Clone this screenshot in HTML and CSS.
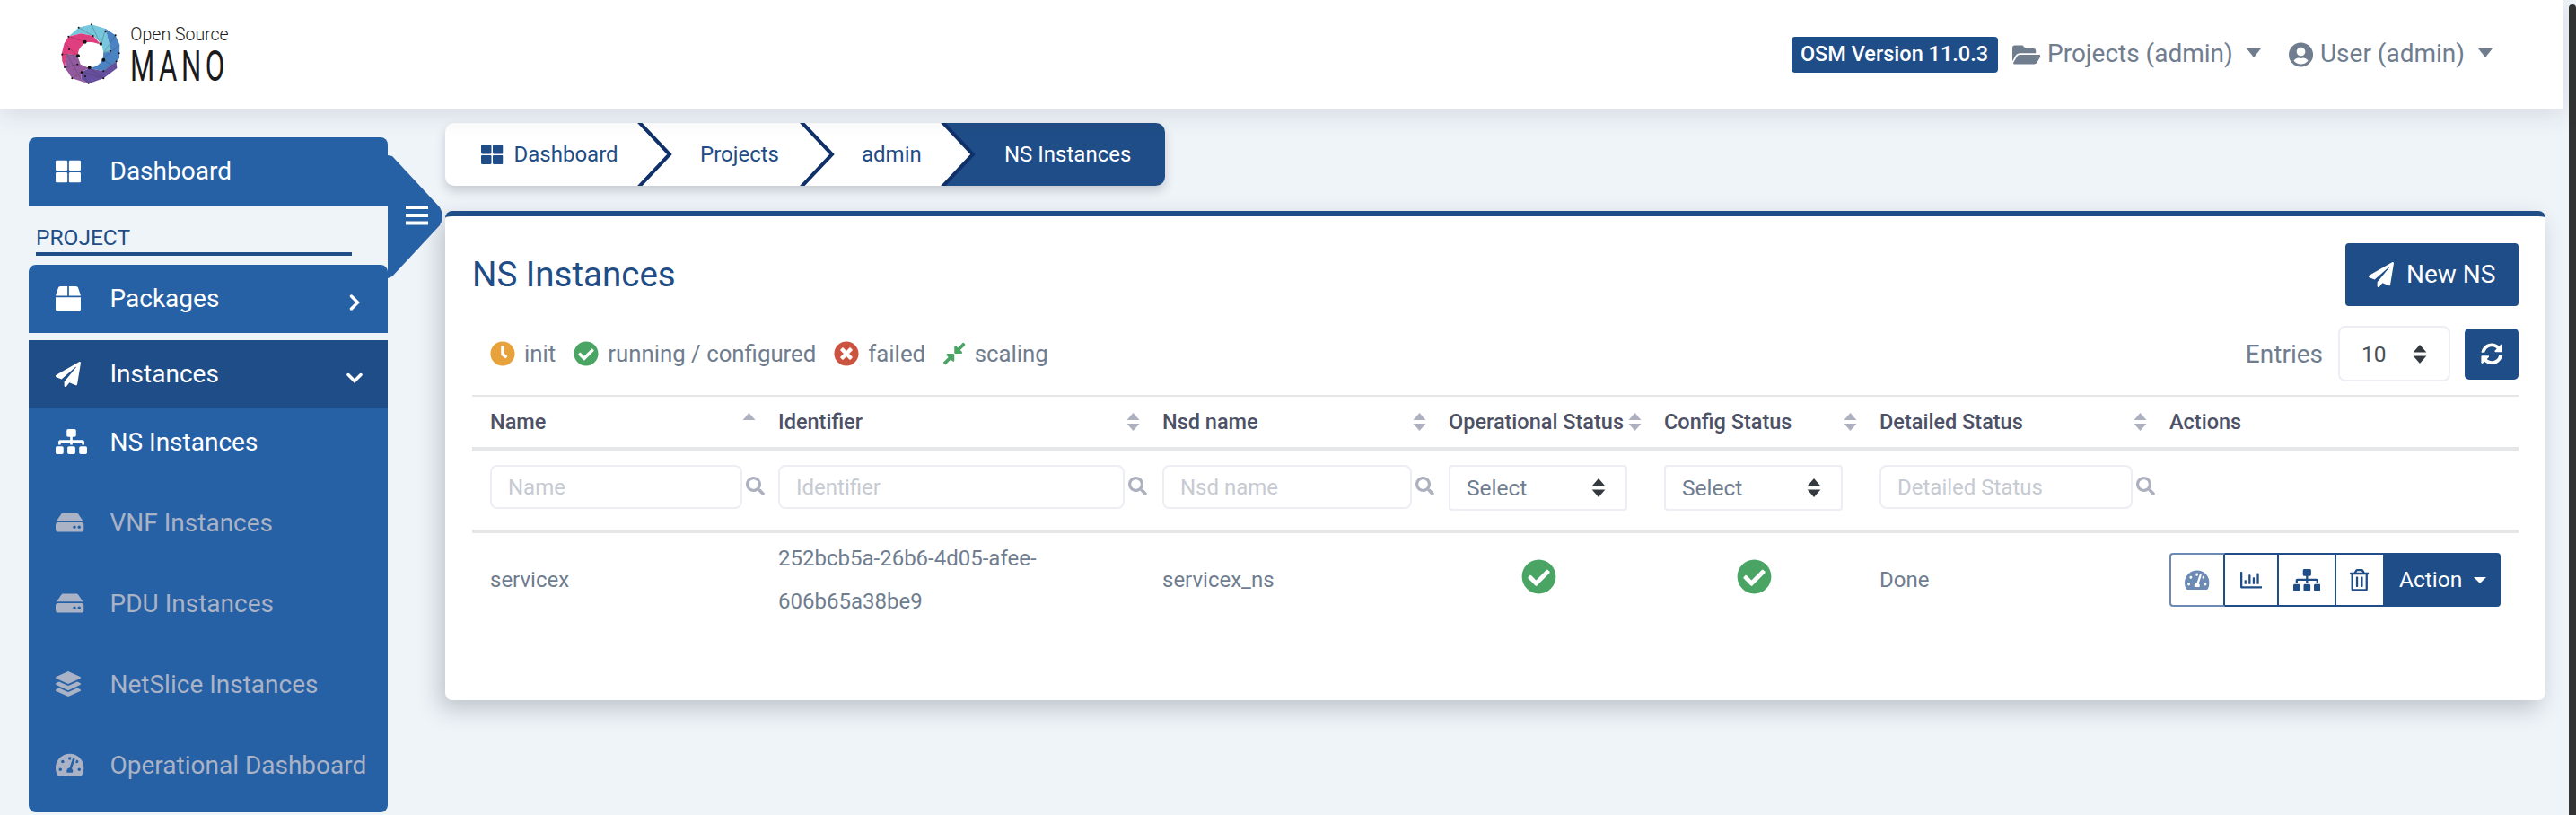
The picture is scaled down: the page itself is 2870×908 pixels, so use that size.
FILE: index.html
```html
<!DOCTYPE html>
<html lang="en">
<head>
<meta charset="utf-8">
<title>NS Instances</title>
<link rel="stylesheet" href="styles.css">
</head>
<body>
<svg class="sprite" xmlns="http://www.w3.org/2000/svg">
  <symbol id="i-th" viewBox="0 0 512 512"><path d="M296 32h192c13.255 0 24 10.745 24 24v160c0 13.255-10.745 24-24 24H296c-13.255 0-24-10.745-24-24V56c0-13.255 10.745-24 24-24zm-80 0H24C10.745 32 0 42.745 0 56v160c0 13.255 10.745 24 24 24h192c13.255 0 24-10.745 24-24V56c0-13.255-10.745-24-24-24zM0 296v160c0 13.255 10.745 24 24 24h192c13.255 0 24-10.745 24-24V296c0-13.255-10.745-24-24-24H24c-13.255 0-24 10.745-24 24zm296 184h192c13.255 0 24-10.745 24-24V296c0-13.255-10.745-24-24-24H296c-13.255 0-24 10.745-24 24v160c0 13.255 10.745 24 24 24z"/></symbol>
  <symbol id="i-box" viewBox="0 0 512 512"><path d="M509.5 184.6L458.9 32.8C452.4 13.2 434.1 0 413.4 0H272v192h238.7c-.4-2.5-.4-5-1.2-7.4zM240 0H98.6c-20.7 0-39 13.2-45.5 32.8L2.5 184.6c-.8 2.4-.8 4.9-1.2 7.4H240V0zM0 224v240c0 26.5 21.5 48 48 48h416c26.5 0 48-21.5 48-48V224H0z"/></symbol>
  <symbol id="i-plane" viewBox="0 0 512 512"><path d="M476 3.2L12.5 270.6c-18.1 10.4-15.8 35.6 2.2 43.2L121 358.4l287.3-253.2c5.5-4.9 13.3 2.6 8.6 8.3L176 407v80.5c0 23.6 28.5 32.9 42.5 15.8L282 426l124.6 52.2c14.2 6 30.4-2.9 33-18.2l72-432C515 7.8 493.3-6.8 476 3.2z"/></symbol>
  <symbol id="i-sitemap" viewBox="0 0 640 512"><path d="M128 352H32c-17.67 0-32 14.33-32 32v96c0 17.67 14.33 32 32 32h96c17.67 0 32-14.33 32-32v-96c0-17.67-14.33-32-32-32zm-24-80h192v48h48v-48h192v48h48v-57.59c0-21.17-17.23-38.41-38.41-38.41H344v-64h40c17.67 0 32-14.33 32-32V32c0-17.67-14.33-32-32-32H256c-17.67 0-32 14.33-32 32v96c0 17.67 14.33 32 32 32h40v64H94.41C73.23 224 56 241.23 56 262.41V320h48v-48zm264 80h-96c-17.67 0-32 14.33-32 32v96c0 17.67 14.33 32 32 32h96c17.67 0 32-14.33 32-32v-96c0-17.67-14.33-32-32-32zm240 0h-96c-17.67 0-32 14.33-32 32v96c0 17.67 14.33 32 32 32h96c17.67 0 32-14.33 32-32v-96c0-17.67-14.33-32-32-32z"/></symbol>
  <symbol id="i-hdd" viewBox="0 0 576 512"><path d="M576 304v96c0 26.51-21.49 48-48 48H48c-26.51 0-48-21.49-48-48v-96c0-26.51 21.49-48 48-48h480c26.51 0 48 21.49 48 48zm-48-80a79.557 79.557 0 0 1 30.777 6.165L462.25 85.374A48.003 48.003 0 0 0 422.311 64H153.689a48 48 0 0 0-39.938 21.374L17.223 230.165A79.557 79.557 0 0 1 48 224h480zm-48 96c-17.673 0-32 14.327-32 32s14.327 32 32 32 32-14.327 32-32-14.327-32-32-32zm-96 0c-17.673 0-32 14.327-32 32s14.327 32 32 32 32-14.327 32-32-14.327-32-32-32z"/></symbol>
  <symbol id="i-layers" viewBox="0 0 512 512"><path d="M12.41 148.02l232.94 105.67c6.8 3.09 14.49 3.09 21.29 0l232.94-105.67c16.55-7.51 16.55-32.52 0-40.03L266.65 2.31a25.607 25.607 0 0 0-21.29 0L12.41 107.98c-16.55 7.51-16.55 32.53 0 40.04zm487.18 88.28l-58.09-26.33-161.64 73.27c-7.56 3.43-15.59 5.17-23.86 5.17s-16.29-1.74-23.86-5.17L70.51 209.97l-58.1 26.33c-16.55 7.5-16.55 32.5 0 40l232.94 105.59c6.8 3.08 14.49 3.08 21.29 0L499.59 276.3c16.55-7.5 16.55-32.5 0-40zm0 127.8l-57.87-26.23-161.86 73.37c-7.56 3.43-15.59 5.17-23.86 5.17s-16.29-1.74-23.86-5.17L70.29 337.87 12.41 364.1c-16.55 7.5-16.55 32.5 0 40l232.94 105.59c6.8 3.08 14.49 3.08 21.29 0L499.59 404.1c16.55-7.5 16.55-32.5 0-40z"/></symbol>
  <symbol id="i-tacho" viewBox="0 0 576 512"><path d="M288 32C128.94 32 0 160.94 0 320c0 52.8 14.25 102.26 39.06 144.8 5.61 9.62 16.3 15.2 27.44 15.2h443c11.14 0 21.83-5.58 27.44-15.2C561.75 422.26 576 372.8 576 320c0-159.06-128.94-288-288-288zm0 64c14.71 0 26.58 10.13 30.32 23.65-1.11 2.26-2.64 4.23-3.45 6.67l-9.22 27.67c-5.13 3.49-10.97 6.01-17.64 6.01-17.67 0-32-14.33-32-32S270.33 96 288 96zM96 384c-17.67 0-32-14.33-32-32s14.33-32 32-32 32 14.33 32 32-14.33 32-32 32zm48-160c-17.67 0-32-14.33-32-32s14.33-32 32-32 32 14.33 32 32-14.33 32-32 32zm246.77-72.41l-61.33 184C343.13 347.33 352 364.54 352 384c0 11.72-3.38 22.55-8.88 32H232.88c-5.5-9.45-8.88-20.28-8.88-32 0-33.94 26.5-61.43 59.9-63.59l61.34-184.01c4.17-12.56 17.73-19.45 30.36-15.17 12.57 4.19 19.35 17.79 15.17 30.36zm14.66 57.2l15.52-46.55c3.47-1.29 7.13-2.23 11.05-2.23 17.67 0 32 14.33 32 32s-14.33 32-32 32c-11.38-.01-20.89-6.28-26.57-15.22zM480 384c-17.67 0-32-14.33-32-32s14.33-32 32-32 32 14.33 32 32-14.33 32-32 32z"/></symbol>
  <symbol id="i-check" viewBox="0 0 512 512"><path d="M504 256c0 136.967-111.033 248-248 248S8 392.967 8 256 119.033 8 256 8s248 111.033 248 248zM227.314 387.314l184-184c6.248-6.248 6.248-16.379 0-22.627l-22.627-22.627c-6.248-6.249-16.379-6.249-22.628 0L216 308.118l-70.059-70.059c-6.248-6.248-16.379-6.248-22.628 0l-22.627 22.627c-6.248 6.248-6.248 16.379 0 22.627l104 104c6.249 6.249 16.379 6.249 22.628.001z"/></symbol>
  <symbol id="i-times" viewBox="0 0 512 512"><path d="M256 8C119 8 8 119 8 256s111 248 248 248 248-111 248-248S393 8 256 8zm121.6 313.1c4.7 4.7 4.7 12.3 0 17L338 377.6c-4.7 4.7-12.3 4.7-17 0L256 312l-65.1 65.6c-4.7 4.7-12.3 4.7-17 0L134.4 338c-4.7-4.7-4.7-12.3 0-17l65.6-65-65.6-65.1c-4.7-4.7-4.7-12.3 0-17l39.6-39.6c4.7-4.7 12.3-4.7 17 0l65 65.7 65.1-65.6c4.7-4.7 12.3-4.7 17 0l39.6 39.6c4.7 4.7 4.7 12.3 0 17L312 256l65.6 65.1z"/></symbol>
  <symbol id="i-clock" viewBox="0 0 512 512"><path d="M256,8C119,8,8,119,8,256S119,504,256,504,504,393,504,256,393,8,256,8Zm92.49,313h0l-20,25a16,16,0,0,1-22.49,2.5h0l-67-49.72a40,40,0,0,1-15-31.23V112a16,16,0,0,1,16-16h32a16,16,0,0,1,16,16V256l58,42.5A16,16,0,0,1,348.49,321Z"/></symbol>
  <symbol id="i-compress" viewBox="0 0 448 512"><path d="M4.686 427.314L104 328l-32.922-31.029C55.958 281.851 66.666 256 88.048 256h112C213.303 256 224 266.745 224 280v112c0 21.382-25.803 32.09-40.922 16.971L152 376l-99.314 99.314c-6.248 6.248-16.379 6.248-22.627 0L4.686 449.941c-6.248-6.248-6.248-16.379 0-22.627zM443.314 84.686L344 184l32.922 32.029c15.12 15.12 4.412 40.971-16.97 40.971h-112C234.697 257 224 246.255 224 233V121c0-21.382 25.803-32.09 40.922-16.971L296 136l99.314-99.314c6.248-6.248 16.379-6.248 22.627 0l25.373 25.373c6.248 6.248 6.248 16.379 0 22.627z"/></symbol>
  <symbol id="i-folder" viewBox="0 0 576 512"><path d="M572.694 292.093L500.27 416.248A63.997 63.997 0 0 1 444.989 448H45.025c-18.523 0-30.064-20.093-20.731-36.093l72.424-124.155A64 64 0 0 1 152 256h399.964c18.523 0 30.064 20.093 20.73 36.093zM152 224h328v-48c0-26.51-21.49-48-48-48H272l-64-64H48C21.49 64 0 85.49 0 112v278.046l69.077-118.418C86.214 242.25 117.989 224 152 224z"/></symbol>
  <symbol id="i-user" viewBox="0 0 496 512"><path d="M248 8C111 8 0 119 0 256s111 248 248 248 248-111 248-248S385 8 248 8zm0 96c48.6 0 88 39.4 88 88s-39.4 88-88 88-88-39.4-88-88 39.4-88 88-88zm0 344c-58.7 0-111.3-26.6-146.5-68.2 18.8-35.4 55.6-59.8 98.5-59.8 2.4 0 4.8.4 7.1 1.1 13 4.2 26.6 6.9 40.9 6.9 14.3 0 28-2.7 40.9-6.9 2.3-.7 4.7-1.1 7.1-1.1 42.9 0 79.7 24.4 98.5 59.8C359.3 421.4 306.7 448 248 448z"/></symbol>
  <symbol id="i-search" viewBox="0 0 512 512"><path d="M505 442.7L405.3 343c-4.5-4.5-10.6-7-17-7H372c27.6-35.3 44-79.7 44-128C416 93.1 322.9 0 208 0S0 93.1 0 208s93.1 208 208 208c48.3 0 92.7-16.4 128-44v16.3c0 6.4 2.5 12.5 7 17l99.7 99.7c9.4 9.4 24.6 9.4 33.9 0l28.3-28.3c9.4-9.4 9.4-24.6.1-34zM208 336c-70.7 0-128-57.2-128-128 0-70.7 57.2-128 128-128 70.7 0 128 57.2 128 128 0 70.7-57.2 128-128 128z"/></symbol>
  <symbol id="i-sync" viewBox="0 0 512 512"><path d="M370.72 133.28C339.458 104.008 298.888 87.962 255.848 88c-77.458.068-144.328 53.178-162.791 126.85-1.344 5.363-6.122 9.15-11.651 9.15H24.103c-7.498 0-13.194-6.807-11.807-14.176C33.933 94.924 134.813 8 256 8c66.448 0 126.791 26.136 171.315 68.685L463.03 40.97C478.149 25.851 504 36.559 504 57.941V192c0 13.255-10.745 24-24 24H345.941c-21.382 0-32.09-25.851-16.971-40.971l41.75-41.749zM32 296h134.059c21.382 0 32.09 25.851 16.971 40.971l-41.75 41.75c31.262 29.273 71.835 45.319 114.876 45.28 77.418-.07 144.315-53.144 162.787-126.849 1.344-5.363 6.122-9.15 11.651-9.15h57.304c7.498 0 13.194 6.807 11.807 14.176C478.067 417.076 377.187 504 256 504c-66.448 0-126.791-26.136-171.315-68.685L48.97 471.03C33.851 486.149 8 475.441 8 454.059V320c0-13.255 10.745-24 24-24z"/></symbol>
  <symbol id="i-chart" viewBox="0 0 512 512"><path d="M396.8 352h22.4c6.4 0 12.8-6.4 12.8-12.8V108.8c0-6.4-6.4-12.8-12.8-12.8h-22.4c-6.4 0-12.8 6.4-12.8 12.8v230.4c0 6.4 6.4 12.8 12.8 12.8zm-192 0h22.4c6.4 0 12.8-6.4 12.8-12.8V140.8c0-6.4-6.4-12.8-12.8-12.8h-22.4c-6.4 0-12.8 6.4-12.8 12.8v198.4c0 6.4 6.4 12.8 12.8 12.8zm96 0h22.4c6.4 0 12.8-6.4 12.8-12.8V204.8c0-6.4-6.4-12.8-12.8-12.8h-22.4c-6.4 0-12.8 6.4-12.8 12.8v134.4c0 6.4 6.4 12.8 12.8 12.8zM496 400H48V80c0-8.84-7.16-16-16-16H16C7.16 64 0 71.16 0 80v336c0 17.67 14.33 32 32 32h464c8.84 0 16-7.16 16-16v-16c0-8.84-7.16-16-16-16zm-387.2-48h22.4c6.4 0 12.8-6.4 12.8-12.8v-70.4c0-6.4-6.4-12.8-12.8-12.8h-22.4c-6.4 0-12.8 6.4-12.8 12.8v70.4c0 6.4 6.4 12.8 12.8 12.8z"/></symbol>
  <symbol id="i-trash" viewBox="0 0 448 512"><path d="M268 416h24a12 12 0 0 0 12-12V188a12 12 0 0 0-12-12h-24a12 12 0 0 0-12 12v216a12 12 0 0 0 12 12zM432 80h-82.41l-34-56.7A48 48 0 0 0 274.41 0H173.59a48 48 0 0 0-41.16 23.3L98.41 80H16A16 16 0 0 0 0 96v16a16 16 0 0 0 16 16h16v336a48 48 0 0 0 48 48h288a48 48 0 0 0 48-48V128h16a16 16 0 0 0 16-16V96a16 16 0 0 0-16-16zM171.84 50.91A6 6 0 0 1 177 48h94a6 6 0 0 1 5.15 2.91L293.61 80H154.39zM368 464H80V128h288zm-212-48h24a12 12 0 0 0 12-12V188a12 12 0 0 0-12-12h-24a12 12 0 0 0-12 12v216a12 12 0 0 0 12 12z"/></symbol>
  <symbol id="i-sort" viewBox="0 0 15 20"><path d="M7.5 0L14.5 8H.5zM7.5 20L.5 12h14z"/></symbol>
  <symbol id="i-sortup" viewBox="0 0 15 20"><path d="M7.5 0L14.5 8H.5z"/></symbol>
</svg>

<div class="app">
  <div class="page">
    <header class="topbar">
      <div class="brand">
        <svg class="logo" viewBox="200 75 205 210" role="img" aria-label="Open Source MANO logo">
          <path class="lg-teal" d="M228 122L262 92L305 82L352 96L370 170L345 177L338 145L310 120L270 112Z"/>
          <path class="lg-blue" d="M352 96L385 118L399 150L398 195L388 205L345 238L298 228L340 200L345 177L370 170Z"/>
          <path class="lg-deep" d="M298 228L345 238L388 205L390 228L345 262L295 280L270 265L272 240Z"/>
          <path class="lg-plum" d="M258 185L268 215L298 228L272 240L270 265L295 280L240 262L215 225L222 180Z"/>
          <path class="lg-pink" d="M205 180L214 145L228 122L270 112L310 120L335 147L283 140L258 185L222 180L215 225L207 205Z"/>
          <circle class="lg-hole" cx="302" cy="183" r="42"/>
          <path class="lg-mesh" d="M228 122L283 140M262 92L310 120M305 82L335 147M352 96L338 145M368 168L345 177M385 118L345 177M398 150L340 200M388 205L345 238M345 200L390 228M298 228L345 262M272 240L345 262M272 240L295 280M258 215L215 225M222 180L270 265M205 180L258 185M214 145L258 185M240 262L272 240"/>
          <g class="lg-dots">
            <circle cx="283" cy="140" r="6"/><circle cx="336" cy="147" r="5"/><circle cx="345" cy="200" r="6"/><circle cx="298" cy="226" r="6"/><circle cx="260" cy="187" r="6"/>
            <circle cx="228" cy="122" r="3"/><circle cx="262" cy="92" r="3"/><circle cx="305" cy="82" r="3"/><circle cx="352" cy="106" r="3"/><circle cx="368" cy="170" r="3"/><circle cx="385" cy="118" r="3"/><circle cx="397" cy="178" r="3"/><circle cx="388" cy="205" r="3"/><circle cx="345" cy="238" r="3"/><circle cx="345" cy="262" r="3"/><circle cx="295" cy="278" r="3"/><circle cx="272" cy="242" r="4"/><circle cx="284" cy="255" r="3"/><circle cx="240" cy="262" r="3"/><circle cx="215" cy="225" r="3"/><circle cx="207" cy="182" r="3"/><circle cx="230" cy="165" r="3"/><circle cx="258" cy="215" r="3"/><circle cx="310" cy="120" r="3"/>
          </g>
        </svg>
        <div class="brand-text">
          <span class="brand-small">Open Source</span>
          <span class="brand-big">MANO</span>
        </div>
      </div>
      <nav class="topnav">
        <span class="badge">OSM Version 11.0.3</span>
        <a class="topnav-item projects"><svg class="ico w576"><use href="#i-folder"/></svg><span>Projects (admin)</span><i class="caret"></i></a>
        <a class="topnav-item users"><svg class="ico w496"><use href="#i-user"/></svg><span>User (admin)</span><i class="caret"></i></a>
      </nav>
    </header>

    <main class="layout">
      <aside class="sidebar">
        <a class="side-link side-top"><span class="side-icon"><svg class="ico w512"><use href="#i-th"/></svg></span><span class="side-text">Dashboard</span></a>
        <div class="side-title"><span>PROJECT</span></div>
        <a class="side-link side-top"><span class="side-icon"><svg class="ico w512"><use href="#i-box"/></svg></span><span class="side-text">Packages</span>
          <svg class="side-chev chev-right" viewBox="0 0 12 18"><path d="M2.5 2L9.5 9L2.5 16"/></svg></a>
        <a class="side-link side-open"><span class="side-icon"><svg class="ico w512"><use href="#i-plane"/></svg></span><span class="side-text">Instances</span>
          <svg class="side-chev chev-down" viewBox="0 0 18 12"><path d="M2 2.5L9 9.5L16 2.5"/></svg></a>
        <ul class="side-sub">
          <li class="sub-item is-active"><span class="side-icon"><svg class="ico w640"><use href="#i-sitemap"/></svg></span>NS Instances</li>
          <li class="sub-item"><span class="side-icon"><svg class="ico w576"><use href="#i-hdd"/></svg></span>VNF Instances</li>
          <li class="sub-item"><span class="side-icon"><svg class="ico w576"><use href="#i-hdd"/></svg></span>PDU Instances</li>
          <li class="sub-item"><span class="side-icon"><svg class="ico w512"><use href="#i-layers"/></svg></span>NetSlice Instances</li>
          <li class="sub-item"><span class="side-icon"><svg class="ico w576"><use href="#i-tacho"/></svg></span>Operational Dashboard</li>
        </ul>
        <button class="side-toggle" aria-label="Toggle sidebar">
          <svg viewBox="0 0 64 137"><path class="toggle-shape" d="M0 0L5 1L58 58Q64 68 58 78L5 135L0 137Z"/><path class="toggle-bars" d="M20 56h25v4H20zM20 65h25v4H20zM20 73.500h25v4H20z"/></svg>
        </button>
      </aside>

      <section class="content">
        <ol class="crumbs">
          <li class="crumb crumb-a"><svg class="ico w512"><use href="#i-th"/></svg><span>Dashboard</span><svg class="crumb-sep" viewBox="0 0 40 70"><path d="M0 -3L36 35L0 73"/></svg></li>
          <li class="crumb crumb-b"><span>Projects</span><svg class="crumb-sep" viewBox="0 0 40 70"><path d="M0 -3L36 35L0 73"/></svg></li>
          <li class="crumb crumb-c"><span>admin</span><svg class="crumb-sep sep-fill" viewBox="0 0 40 70"><path d="M0 -3L36 35L0 73"/></svg></li>
          <li class="crumb crumb-d"><span>NS Instances</span></li>
        </ol>

        <div class="card">
          <div class="card-head">
            <h1 class="card-title">NS Instances</h1>
            <button class="btn-new"><svg class="ico w512"><use href="#i-plane"/></svg><span>New NS</span></button>
          </div>
          <div class="toolbar">
            <ul class="legend">
              <li><svg class="ico w512 c-orange"><use href="#i-clock"/></svg>init</li>
              <li><svg class="ico w512 c-green"><use href="#i-check"/></svg>running / configured</li>
              <li><svg class="ico w512 c-red"><use href="#i-times"/></svg>failed</li>
              <li><svg class="ico w448 c-green"><use href="#i-compress"/></svg>scaling</li>
            </ul>
            <div class="entries">
              <span class="entries-label">Entries</span>
              <div class="select select-entries"><span>10</span><svg class="select-arrow"><use href="#i-sort"/></svg></div>
              <button class="btn-refresh" aria-label="Refresh"><svg class="ico w512"><use href="#i-sync"/></svg></button>
            </div>
          </div>

          <table class="grid">
            <colgroup>
              <col class="col-name"><col class="col-id"><col class="col-nsd"><col class="col-status"><col class="col-status"><col class="col-detail"><col class="col-actions">
            </colgroup>
            <thead>
              <tr class="row-head">
                <th><div class="th-in"><span>Name</span><svg class="sort"><use href="#i-sortup"/></svg></div></th>
                <th><div class="th-in"><span>Identifier</span><svg class="sort"><use href="#i-sort"/></svg></div></th>
                <th><div class="th-in"><span>Nsd name</span><svg class="sort"><use href="#i-sort"/></svg></div></th>
                <th><div class="th-in"><span>Operational Status</span><svg class="sort"><use href="#i-sort"/></svg></div></th>
                <th><div class="th-in"><span>Config Status</span><svg class="sort"><use href="#i-sort"/></svg></div></th>
                <th><div class="th-in"><span>Detailed Status</span><svg class="sort"><use href="#i-sort"/></svg></div></th>
                <th><div class="th-in"><span>Actions</span></div></th>
              </tr>
              <tr class="row-filter">
                <td><div class="filter f-name"><input placeholder="Name"><svg class="search"><use href="#i-search"/></svg></div></td>
                <td><div class="filter f-id"><input placeholder="Identifier"><svg class="search"><use href="#i-search"/></svg></div></td>
                <td><div class="filter f-nsd"><input placeholder="Nsd name"><svg class="search"><use href="#i-search"/></svg></div></td>
                <td><div class="select select-filter"><span>Select</span><svg class="select-arrow"><use href="#i-sort"/></svg></div></td>
                <td><div class="select select-filter"><span>Select</span><svg class="select-arrow"><use href="#i-sort"/></svg></div></td>
                <td><div class="filter f-detail"><input placeholder="Detailed Status"><svg class="search"><use href="#i-search"/></svg></div></td>
                <td></td>
              </tr>
            </thead>
            <tbody>
              <tr class="row-data">
                <td>servicex</td>
                <td>252bcb5a-26b6-4d05-afee-606b65a38be9</td>
                <td>servicex_ns</td>
                <td class="cell-icon"><svg class="status-ok"><use href="#i-check"/></svg></td>
                <td class="cell-icon"><svg class="status-ok"><use href="#i-check"/></svg></td>
                <td>Done</td>
                <td class="cell-actions">
                  <div class="actions">
                    <button class="act act-1"><svg class="ico w576"><use href="#i-tacho"/></svg></button>
                    <button class="act act-2"><svg class="ico w512"><use href="#i-chart"/></svg></button>
                    <button class="act act-3"><svg class="ico w640"><use href="#i-sitemap"/></svg></button>
                    <button class="act act-4"><svg class="ico w448"><use href="#i-trash"/></svg></button>
                    <button class="act-main"><span>Action</span><i class="caret"></i></button>
                  </div>
                </td>
              </tr>
            </tbody>
          </table>
        </div>
      </section>
    </main>
  </div>
  <div class="scrollbar"></div>
</div>
</body>
</html>
```

FILE: styles.css
```css
* { box-sizing: border-box; }
html, body { margin: 0; height: 100%; overflow: hidden; }
body {
  background: #eff4f9;
  font-family: Roboto, "Liberation Sans", sans-serif;
  font-size: 24px;
  color: #6f7d8f;
}
.sprite { display: none; }
.ico { height: 1em; fill: currentColor; flex: none; display: block; }
.w448 { width: .875em; }
.w496 { width: .969em; }
.w512 { width: 1em; }
.w576 { width: 1.125em; }
.w640 { width: 1.25em; }
.caret {
  display: block;
  width: 0; height: 0;
  border-left: 8.500px solid transparent;
  border-right: 8.500px solid transparent;
  border-top: 10px solid currentColor;
}

.app { display: flex; height: 908px; }
.page { width: 2856px; flex: none; }
.scrollbar {
  width: 8px;
  margin: 5px 0 0 6px;
  background: #333;
  border-radius: 4px 4px 0 0;
}

/* Top bar */
.topbar {
  height: 121px;
  background: #fff;
  display: flex;
  justify-content: space-between;
  align-items: center;
  padding: 0 79px 0 67px;
  box-shadow: 0 6px 26px rgba(40, 50, 60, .13);
  position: relative;
  z-index: 1;
}
.brand { display: flex; align-items: flex-start; }
.logo { width: 68.330px; height: 70px; flex: none; }
.lg-teal { fill: #76c6dc; }
.lg-blue { fill: #4a82c2; }
.lg-deep { fill: #674f9f; }
.lg-plum { fill: #93599f; }
.lg-pink { fill: #df3f7e; }
.lg-hole { fill: #fff; }
.lg-mesh { fill: none; stroke: #333; stroke-width: 1.2; opacity: .7; }
.lg-dots { fill: #111; }
.brand-text { margin-left: 10px; padding-top: 1px; display: flex; flex-direction: column; color: #1a1a1a; }
.brand-small { display: block; font-size: 19.500px; font-weight: 300; line-height: 26px; white-space: nowrap; }
.brand-big {
  display: block;
  font-size: 48px;
  font-weight: 400;
  line-height: 44px;
  letter-spacing: 7px;
  white-space: nowrap;
  transform: scaleX(.65);
  transform-origin: left center;
}
.topnav { display: flex; align-items: center; font-size: 28px; }
.badge {
  background: #1f4d87;
  color: #fff;
  font-size: 23.500px;
  font-weight: 500;
  height: 40px;
  width: 230px;
  display: flex;
  align-items: center;
  justify-content: center;
  padding-bottom: 2px;
  border-radius: 4px;
}
.topnav-item { display: flex; align-items: center; }
.topnav-item span { padding-bottom: 2px; }
.topnav-item .ico { margin-right: 8px; }
.topnav-item .caret { margin-left: 15px; margin-top: -3px; }
.projects { margin-left: 16px; }
.users { margin-left: 31px; }

/* Layout */
.layout { display: flex; align-items: flex-start; }

/* Sidebar */
.sidebar {
  width: 400px;
  margin: 32px 0 0 32px;
  flex: none;
  position: relative;
  font-size: 28px;
  color: #fff;
}
.side-link {
  height: 76px;
  display: flex;
  align-items: center;
  padding-left: 30px;
  position: relative;
  z-index: 1;
}
.side-text { padding-bottom: 2px; }
.side-top { background: #2660a5; border-radius: 8px 8px 0 0; }
.side-open { background: #1f4d87; margin-top: 8px; border-radius: 0; }
.side-icon { width: 60.500px; flex: none; display: block; }
.side-chev { position: absolute; fill: none; stroke: #fff; stroke-width: 3.500px; stroke-linecap: round; }
.chev-right { width: 12px; height: 18px; right: 31px; top: 33px; }
.chev-down { width: 18px; height: 12px; right: 28px; top: 36px; }
.side-title {
  height: 66px;
  padding: 0 8px;
  font-size: 24.500px;
  color: #1f4d87;
}
.side-title span {
  display: block;
  height: 56px;
  padding-top: 21px;
  line-height: 30px;
  border-bottom: 4px solid #1f4d87;
  width: 352px;
}
.side-sub { list-style: none; margin: 0; padding: 0; background: #2660a5; border-radius: 0 0 8px 8px; }
.sub-item {
  height: 90px;
  padding: 0 0 16px 30px;
  display: flex;
  align-items: center;
  color: #aab3c6;
}
.sub-item.is-active { color: #fff; }
.side-toggle {
  position: absolute;
  left: 400px;
  top: 20px;
  width: 64px;
  height: 137px;
  padding: 0;
  border: 0;
  background: none;
  z-index: 2;
}
.side-toggle svg { display: block; width: 64px; height: 137px; }
.toggle-shape { fill: #2660a5; }
.toggle-bars { fill: #fff; }

/* Content */
.content { width: 2340px; margin: 16px 0 0 64px; flex: none; }
.crumbs {
  list-style: none;
  margin: 0;
  padding: 0;
  display: flex;
  width: 802px;
  height: 70px;
  border-radius: 10px;
  background: #fff;
  color: #1f4d87;
  box-shadow: 0 6px 12px rgba(30, 40, 50, .2);
  overflow: hidden;
}
.crumb { position: relative; display: flex; align-items: center; height: 70px; flex: none; }
.crumb span { padding-bottom: 1px; }
.crumb .ico { margin-right: 12px; width: 24.500px; height: 24.500px; }
.crumb-a { width: 214px; padding-left: 40px; }
.crumb-b { width: 181px; padding-left: 70px; }
.crumb-c { width: 157px; padding-left: 69px; }
.crumb-d { width: 250px; padding-left: 71px; background: #1f4d87; color: #fff; }
.crumb-sep {
  position: absolute;
  left: 100%;
  top: 0;
  width: 40px;
  height: 70px;
  fill: none;
  stroke: #0f3068;
  stroke-width: 4;
  z-index: 1;
}
.crumb-d { z-index: 0; }
.crumb-a, .crumb-b, .crumb-c { z-index: 1; }
.sep-fill { fill: #fff; }

.card {
  margin-top: 28px;
  height: 545px;
  background: #fff;
  border-top: 6px solid #1f4d87;
  border-radius: 8px;
  padding: 30px 30px 0;
  box-shadow: -6px 10px 26px rgba(30, 40, 50, .24);
}
.card-head { display: flex; justify-content: space-between; align-items: center; height: 70px; }
.card-title { margin: 0; font-size: 38.500px; font-weight: 400; color: #1f4d87; padding-bottom: 2px; }
.btn-new {
  width: 193px;
  height: 70px;
  background: #1f4d87;
  border: 0;
  border-radius: 4px;
  color: #fff;
  font: 400 28px Roboto, sans-serif;
  display: flex;
  align-items: center;
  padding-left: 26px;
}
.btn-new .ico { margin-right: 14px; }
.btn-new span { padding-bottom: 2px; }
.toolbar { display: flex; justify-content: space-between; align-items: center; height: 62px; margin-top: 22px; }
.legend { list-style: none; margin: 0; padding: 0 0 0 20px; display: flex; align-items: center; gap: 20px; font-size: 25.800px; }
.legend li { display: flex; align-items: center; }
.legend .ico { width: 28px; height: 28px; margin-right: 10px; }
.legend .ico.w448 { width: 24.500px; }
.c-orange { color: #e8a23b; }
.c-green { color: #4aa564; }
.c-red { color: #cc5340; }
.entries { display: flex; align-items: center; }
.entries-label { font-size: 28px; margin-right: 17px; }
.select {
  display: flex;
  align-items: center;
  justify-content: space-between;
  background: #fff;
  border: 2px solid #eceef3;
  color: #6f7d8f;
  font-size: 24.500px;
}
.select-entries {
  width: 125px;
  height: 62px;
  border-radius: 8px;
  padding: 0 24px 0 24px;
  color: #495057;
}
.select-filter {
  width: 199px;
  height: 51px;
  border-radius: 4px;
  padding: 0 22px 0 18px;
}
.select-arrow { width: 16px; height: 21px; fill: #343a40; flex: none; }
.btn-refresh {
  width: 60px;
  height: 57px;
  margin-left: 16px;
  background: #1f4d87;
  border: 0;
  border-radius: 5px;
  color: #fff;
  font-size: 24.500px;
  padding: 0;
  display: flex;
  align-items: center;
  justify-content: center;
}

/* Table */
.grid {
  width: 2280px;
  margin-top: 15px;
  table-layout: fixed;
  border-collapse: separate;
  border-spacing: 0;
}
.col-name { width: 321px; }
.col-id { width: 428px; }
.col-nsd { width: 319px; }
.col-status { width: 240px; }
.col-detail { width: 323px; }
.col-actions { width: 409px; }
.row-head th {
  height: 62px;
  border-top: 2px solid #e4e6e8;
  border-bottom: 4px solid #e4e6e8;
  padding: 0 5px 0 20px;
  font-size: 23.500px;
  font-weight: 500;
  color: #4d5166;
  text-align: left;
  white-space: nowrap;
}
.th-in { display: flex; justify-content: space-between; align-items: center; }
.th-in span { padding-bottom: 1px; }
.sort { width: 15px; height: 20px; fill: #adb1bf; flex: none; }
.row-filter td {
  height: 92px;
  border-bottom: 4px solid #e4e6e8;
  padding: 16px 0 0 20px;
  vertical-align: top;
}
.filter { display: flex; align-items: flex-start; }
.filter input {
  height: 49px;
  border: 2px solid #eceef3;
  border-radius: 8px;
  padding: 0 18px;
  font: 400 24px Roboto, sans-serif;
  color: #495057;
  background: #fff;
  outline: 0;
  flex: none;
}
.filter input::placeholder { color: #c6cad2; opacity: 1; }
.f-name input { width: 281px; }
.f-id input { width: 386px; }
.f-nsd input { width: 278px; }
.f-detail input { width: 282px; }
.search { width: 21px; height: 21px; margin: 13px 0 0 4px; fill: #adb1bf; flex: none; }
.row-data td {
  height: 106px;
  padding: 0 20px 2px;
  line-height: 48px;
  vertical-align: middle;
}
.row-data .cell-actions { padding-bottom: 0; }
.cell-icon { text-align: center; }
.status-ok { display: block; width: 39px; height: 39px; margin: 0 auto 8px; fill: #4aa564; }
.actions { display: flex; width: 369px; height: 60px; margin-bottom: 2px; }
.act {
  height: 60px;
  background: #fff;
  border: 2px solid #1f4d87;
  border-right: 0;
  color: #1f4d87;
  padding: 0;
  display: flex;
  align-items: center;
  justify-content: center;
  font-size: 24.500px;
}
.act-1 { width: 62px; border-radius: 4px 0 0 4px; border-color: #6b8ab4; border-right: 2px solid #1f4d87; color: #6b8ab4; }
.act-2 { width: 58px; border-left: 0; }
.act-3 { width: 64px; }
.act-4 { width: 54px; }
.act-main {
  width: 131px;
  height: 60px;
  background: #1f4d87;
  color: #fff;
  border: 0;
  border-radius: 0 4px 4px 0;
  font: 400 24.500px Roboto, sans-serif;
  display: flex;
  align-items: center;
  padding: 0 0 0 18px;
}
.act-main span { padding-bottom: 2px; }
.act-main .caret {
  margin-left: 13px;
  border-left-width: 7px;
  border-right-width: 7px;
  border-top-width: 7px;
}
```
